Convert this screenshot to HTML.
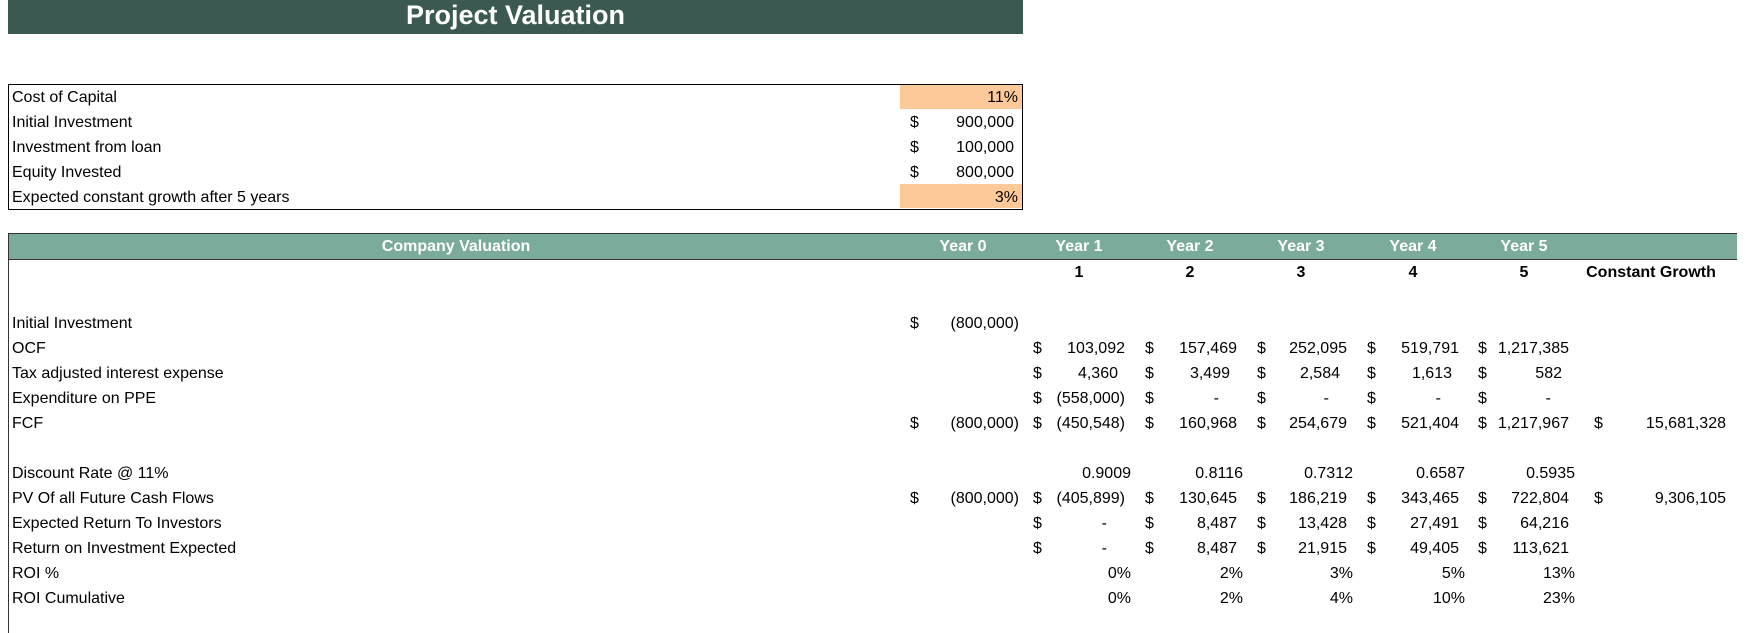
<!DOCTYPE html>
<html><head><meta charset="utf-8"><style>
body{margin:0;width:1748px;height:633px;background:#fff;position:relative;overflow:hidden;font-family:"Liberation Sans",sans-serif;font-size:16px;color:#000}
div{position:absolute;white-space:nowrap}
.t{line-height:25px;height:25px}
.r{text-align:right}
.c{text-align:center}
.b{font-weight:bold}
</style></head><body>
<div style="left:8px;top:0;width:1015px;height:34px;background:#3b5950"></div>
<div class="c b" style="left:8px;top:0;width:1015px;line-height:30px;color:#fff;font-size:27px">Project Valuation</div>

<div style="left:900px;top:85px;width:122px;height:24px;background:#fdc998"></div>
<div style="left:900px;top:184px;width:122px;height:24px;background:#fdc998"></div>
<div style="left:8px;top:84px;width:1013px;height:124px;border:1px solid #000"></div>
<div class="t" style="left:12px;top:85px">Cost of Capital</div>
<div class="t" style="left:12px;top:110px">Initial Investment</div>
<div class="t" style="left:12px;top:135px">Investment from loan</div>
<div class="t" style="left:12px;top:160px">Equity Invested</div>
<div class="t" style="left:12px;top:185px">Expected constant growth after 5 years</div>
<div class="t r" style="left:900px;width:118px;top:85px">11%</div>
<div class="t" style="left:910px;top:110px">$</div><div class="t r" style="left:900px;width:114px;top:110px">900,000</div>
<div class="t" style="left:910px;top:135px">$</div><div class="t r" style="left:900px;width:114px;top:135px">100,000</div>
<div class="t" style="left:910px;top:160px">$</div><div class="t r" style="left:900px;width:114px;top:160px">800,000</div>
<div class="t r" style="left:900px;width:118px;top:185px">3%</div>

<div style="left:8px;top:233px;width:1729px;height:25px;background:#7aab9b;border-top:1px solid #333;border-bottom:1px solid #333"></div>
<div style="left:8px;top:233px;width:1px;height:400px;background:#333"></div>
<div class="t c b" style="left:256px;width:400px;top:234px;color:#fff">Company Valuation</div>
<div class="t c b" style="left:903px;width:120px;top:234px;color:#fff">Year 0</div>
<div class="t c b" style="left:1019px;width:120px;top:234px;color:#fff">Year 1</div>
<div class="t c b" style="left:1130px;width:120px;top:234px;color:#fff">Year 2</div>
<div class="t c b" style="left:1241px;width:120px;top:234px;color:#fff">Year 3</div>
<div class="t c b" style="left:1353px;width:120px;top:234px;color:#fff">Year 4</div>
<div class="t c b" style="left:1464px;width:120px;top:234px;color:#fff">Year 5</div>
<div class="t c b" style="left:1019px;width:120px;top:260px">1</div>
<div class="t c b" style="left:1130px;width:120px;top:260px">2</div>
<div class="t c b" style="left:1241px;width:120px;top:260px">3</div>
<div class="t c b" style="left:1353px;width:120px;top:260px">4</div>
<div class="t c b" style="left:1464px;width:120px;top:260px">5</div>
<div class="t c b" style="left:1571px;width:160px;top:260px">Constant Growth</div>

<div id="rows"></div>
<script>
var L=[["Initial Investment",311],["OCF",336],["Tax adjusted interest expense",361],["Expenditure on PPE",386],["FCF",411],["Discount Rate @ 11%",461],["PV Of all Future Cash Flows",486],["Expected Return To Investors",511],["Return on Investment Expected",536],["ROI %",561],["ROI Cumulative",586]];
var S=[910,1033,1145,1257,1367,1478,1594],R=[1019,1125,1237,1347,1459,1569,1726];
var D={311:[["$","(800,000)"]],
336:[null,["$","103,092"],["$","157,469"],["$","252,095"],["$","519,791"],["$","1,217,385"]],
361:[null,["$","4,360 "],["$","3,499 "],["$","2,584 "],["$","1,613 "],["$","582 "]],
386:[null,["$","(558,000)"],["$","- "],["$","- "],["$","- "],["$","- "]],
411:[["$","(800,000)"],["$","(450,548)"],["$","160,968"],["$","254,679"],["$","521,404"],["$","1,217,967"],["$","15,681,328"]],
461:[null,["","0.9009"],["","0.8116"],["","0.7312"],["","0.6587"],["","0.5935"]],
486:[["$","(800,000)"],["$","(405,899)"],["$","130,645"],["$","186,219"],["$","343,465"],["$","722,804"],["$","9,306,105"]],
511:[null,["$","- "],["$","8,487"],["$","13,428"],["$","27,491"],["$","64,216"]],
536:[null,["$","- "],["$","8,487"],["$","21,915"],["$","49,405"],["$","113,621"]],
561:[null,["","0%"],["","2%"],["","3%"],["","5%"],["","13%"]],
586:[null,["","0%"],["","2%"],["","4%"],["","10%"],["","23%"]]};
var h="";
L.forEach(function(l){h+='<div class="t" style="left:12px;top:'+l[1]+'px">'+l[0]+'</div>';
(D[l[1]]||[]).forEach(function(c,i){if(!c)return;
if(c[0])h+='<div class="t" style="left:'+S[i]+'px;top:'+l[1]+'px">$</div>';
var right=R[i]+(c[0]?0:6);var v=c[1].replace(/ $/,'');var pad=c[1].slice(-1)==' '?7:0;
if(v=='-')pad=18;
h+='<div class="t r" style="left:'+(right-150)+'px;width:'+(150-pad)+'px;top:'+l[1]+'px">'+v+'</div>';});});
document.getElementById("rows").outerHTML=h;
</script>
</body></html>
